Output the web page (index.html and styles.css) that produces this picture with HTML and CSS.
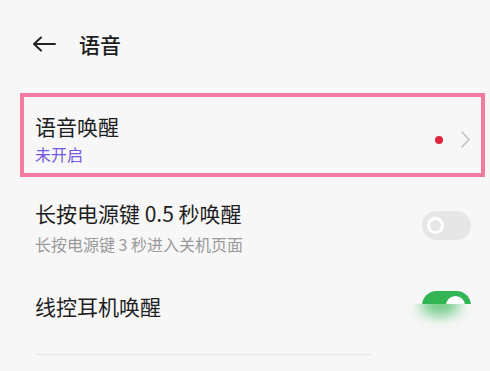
FILE: index.html
```html
<!DOCTYPE html>
<html lang="zh-CN">
<head>
<meta charset="utf-8">
<link rel="stylesheet" href="styles.css">
</head>
<body>
<div class="page">
  <header class="header">
    <svg class="back" width="24" height="16" viewBox="0 0 24 16">
      <path d="M9 1.5 L2 8 L9 14.5 M2 8 H23" fill="none" stroke="#222" stroke-width="2" stroke-linecap="round" stroke-linejoin="round"/>
    </svg>
    <h1 class="title">语音</h1>
  </header>

  <div class="item highlight">
    <div class="text">
      <div class="item-title">语音唤醒</div>
      <div class="item-sub purple">未开启</div>
    </div>
    <div class="trail">
      <span class="dot"></span>
      <svg class="chev" width="9" height="17" viewBox="0 0 9 17">
        <path d="M1 1 L8 8.5 L1 16" fill="none" stroke="#c4c4c4" stroke-width="1.6" stroke-linecap="round" stroke-linejoin="round"/>
      </svg>
    </div>
  </div>

  <div class="item row2">
    <div class="text">
      <div class="item-title">长按电源键 0.5 秒唤醒</div>
      <div class="item-sub">长按电源键 3 秒进入关机页面</div>
    </div>
    <span class="switch off"><span class="knob"></span></span>
  </div>

  <div class="item row3">
    <div class="text">
      <div class="item-title">线控耳机唤醒</div>
    </div>
    <span class="switch on"><span class="knob"></span></span>
  </div>
  <div class="divider"></div>

  <div class="smear"><span class="smear-green"></span></div>
</div>
</body>
</html>
```

FILE: styles.css
```css
html, body {
  margin: 0;
  padding: 0;
  background: #f7f7f7;
}
body {
  font-family: "Noto Sans CJK SC", "Noto Sans", sans-serif;
  color: #1e1e1e;
  width: 490px;
  height: 371px;
  overflow: hidden;
}
.page {
  position: relative;
  width: 490px;
  height: 371px;
}
.header {
  height: 88px;
  display: flex;
  align-items: center;
  padding-left: 32px;
  box-sizing: border-box;
}
.back {
  display: block;
}
.title {
  margin: 0 0 0 23px;
  font-size: 21px;
  font-weight: 500;
  line-height: 26px;
  color: #1e1e1e;
}
.item {
  display: flex;
  justify-content: space-between;
}
.highlight {
  margin: 5px 5px 0 20px;
  height: 84px;
  box-sizing: border-box;
  border: 4px solid #f47aa0;
  padding: 16px 11px 0 11px;
  align-items: flex-start;
}
.item-title {
  font-size: 21px;
  line-height: 26px;
  color: #1e1e1e;
}
.item-sub {
  font-size: 16px;
  line-height: 20px;
  margin-top: 8px;
  color: #9a9a9a;
}
.item-sub.purple {
  color: #7459dd;
  margin-top: 5px;
}
.trail {
  display: flex;
  align-items: center;
  margin-top: 18px;
}
.dot {
  width: 8px;
  height: 8px;
  border-radius: 50%;
  background: #e1243f;
  margin-right: 18px;
}
.chev {
  display: block;
}
.row2 {
  padding: 23px 19px 0 35px;
  align-items: center;
}
.row3 {
  padding: 37px 19px 0 35px;
  align-items: center;
}
.switch {
  position: relative;
  width: 49px;
  height: 29px;
  border-radius: 15px;
  display: block;
  flex: none;
}
.switch.off {
  background: #e6e6e6;
  margin-top: -4px;
}
.switch.off .knob {
  position: absolute;
  left: 5px;
  top: 6px;
  width: 11px;
  height: 11px;
  border: 3px solid #ffffff;
  border-radius: 50%;
}
.switch.on {
  background: #33b553;
}
.switch.on .knob {
  position: absolute;
  right: 6px;
  top: 5px;
  width: 19px;
  height: 19px;
  border-radius: 50%;
  background: #ffffff;
}
.divider {
  margin: 34px 0 0 35px;
  width: 336px;
  height: 1px;
  background: #e6e6e6;
}
.smear {
  position: absolute;
  left: 400px;
  top: 304px;
  width: 90px;
  height: 60px;
  background: #f7f7f7;
  overflow: hidden;
}
.smear-green {
  position: absolute;
  left: 20px;
  top: -10px;
  width: 40px;
  height: 22px;
  border-radius: 50%;
  background: #4cbf68;
  filter: blur(7px);
  opacity: 0.8;
}
```
